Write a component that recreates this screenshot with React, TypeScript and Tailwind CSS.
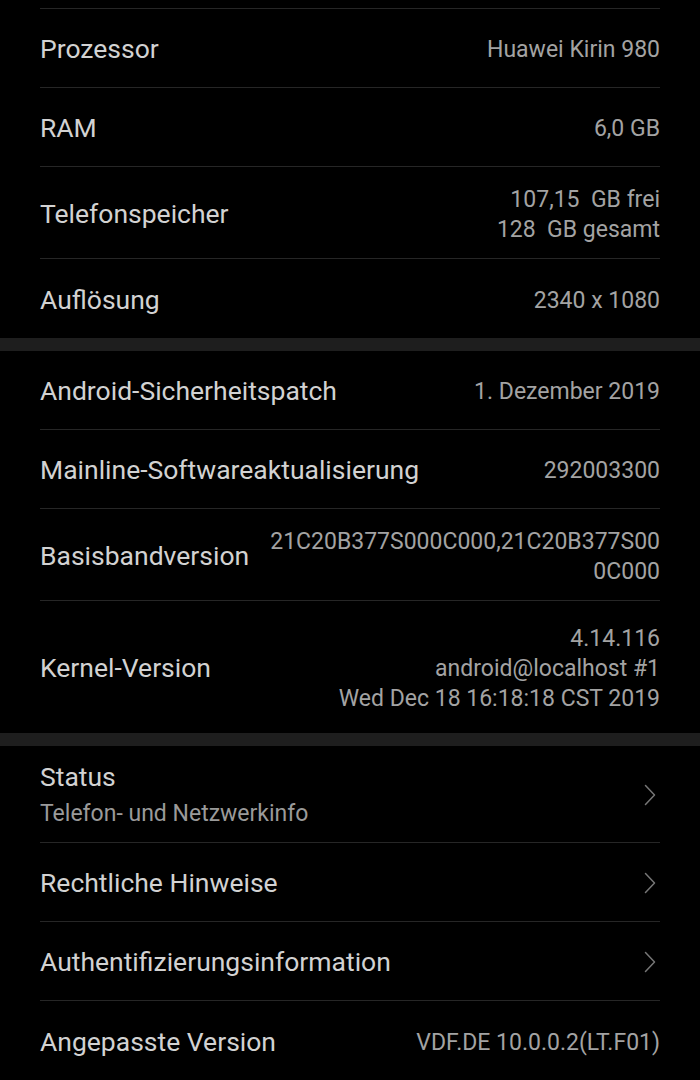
import React from "react";

type Row = { label: string; value?: string[]; sub?: string; chevron?: boolean; h: string };

const hardware: Row[] = [
  { label: "Prozessor", value: ["Huawei Kirin 980"], h: "h-[79px]" },
  { label: "RAM", value: ["6,0 GB"], h: "h-[79px]" },
  { label: "Telefonspeicher", value: ["107,15  GB frei", "128  GB gesamt"], h: "h-[92px]" },
  { label: "Auflösung", value: ["2340 x 1080"], h: "h-[79px]" },
];

const software: Row[] = [
  { label: "Android-Sicherheitspatch", value: ["1. Dezember 2019"], h: "h-[79px]" },
  { label: "Mainline-Softwareaktualisierung", value: ["292003300"], h: "h-[79px]" },
  { label: "Basisbandversion", value: ["21C20B377S000C000,21C20B377S00", "0C000"], h: "h-[92px]" },
  {
    label: "Kernel-Version",
    value: ["4.14.116", "android@localhost #1", "Wed Dec 18 16:18:18 CST 2019"],
    h: "h-[132px]",
  },
];

const more: Row[] = [
  { label: "Status", sub: "Telefon- und Netzwerkinfo", chevron: true, h: "h-[97px]" },
  { label: "Rechtliche Hinweise", chevron: true, h: "h-[79px]" },
  { label: "Authentifizierungsinformation", chevron: true, h: "h-[79px]" },
  { label: "Angepasste Version", value: ["VDF.DE 10.0.0.2(LT.F01)"], h: "h-[79px]" },
];

function Chevron() {
  return (
    <svg width="12" height="22" viewBox="0 0 12 22" fill="none" className="shrink-0">
      <path d="M1.5 1.5 L10.5 11 L1.5 20.5" stroke="#767676" strokeWidth="1.5" strokeLinecap="round" strokeLinejoin="round" />
    </svg>
  );
}

function Section({ rows }: { rows: Row[] }) {
  return (
    <div className="px-10">
      {rows.map((r, i) => (
        <div
          key={r.label}
          className={
            "flex items-center justify-between " +
            r.h +
            (i < rows.length - 1 ? " border-b border-[#262626]" : "")
          }
        >
          <div className="flex flex-col pt-[2px]">
            <span className="text-[26.5px] leading-[30px] text-[#d2d2d2] whitespace-nowrap">{r.label}</span>
            {r.sub && <span className="mt-[8px] text-[23px] leading-[28px] text-[#9a9a9a]">{r.sub}</span>}
          </div>
          {r.value && (
            <div className="flex flex-col items-end text-right pl-4 pt-[4px]">
              {r.value.map((v) => (
                <span key={v} className="text-[23px] leading-[30px] text-[#a3a3a3] whitespace-pre">{v}</span>
              ))}
            </div>
          )}
          {r.chevron && (
            <div className="pr-[4px] pt-[2px]">
              <Chevron />
            </div>
          )}
        </div>
      ))}
    </div>
  );
}

export default function App() {
  return (
    <div className="w-[700px] h-[1080px] overflow-hidden bg-black" style={{ fontFamily: "Roboto, 'Noto Sans', sans-serif" }}>
      <div className="h-[8px]" />
      <div className="border-t border-[#262626] mx-10" />
      <Section rows={hardware} />
      <div className="h-[13px] bg-[#1e1e1e]" />
      <Section rows={software} />
      <div className="h-[13px] bg-[#1e1e1e]" />
      <Section rows={more} />
    </div>
  );
}
